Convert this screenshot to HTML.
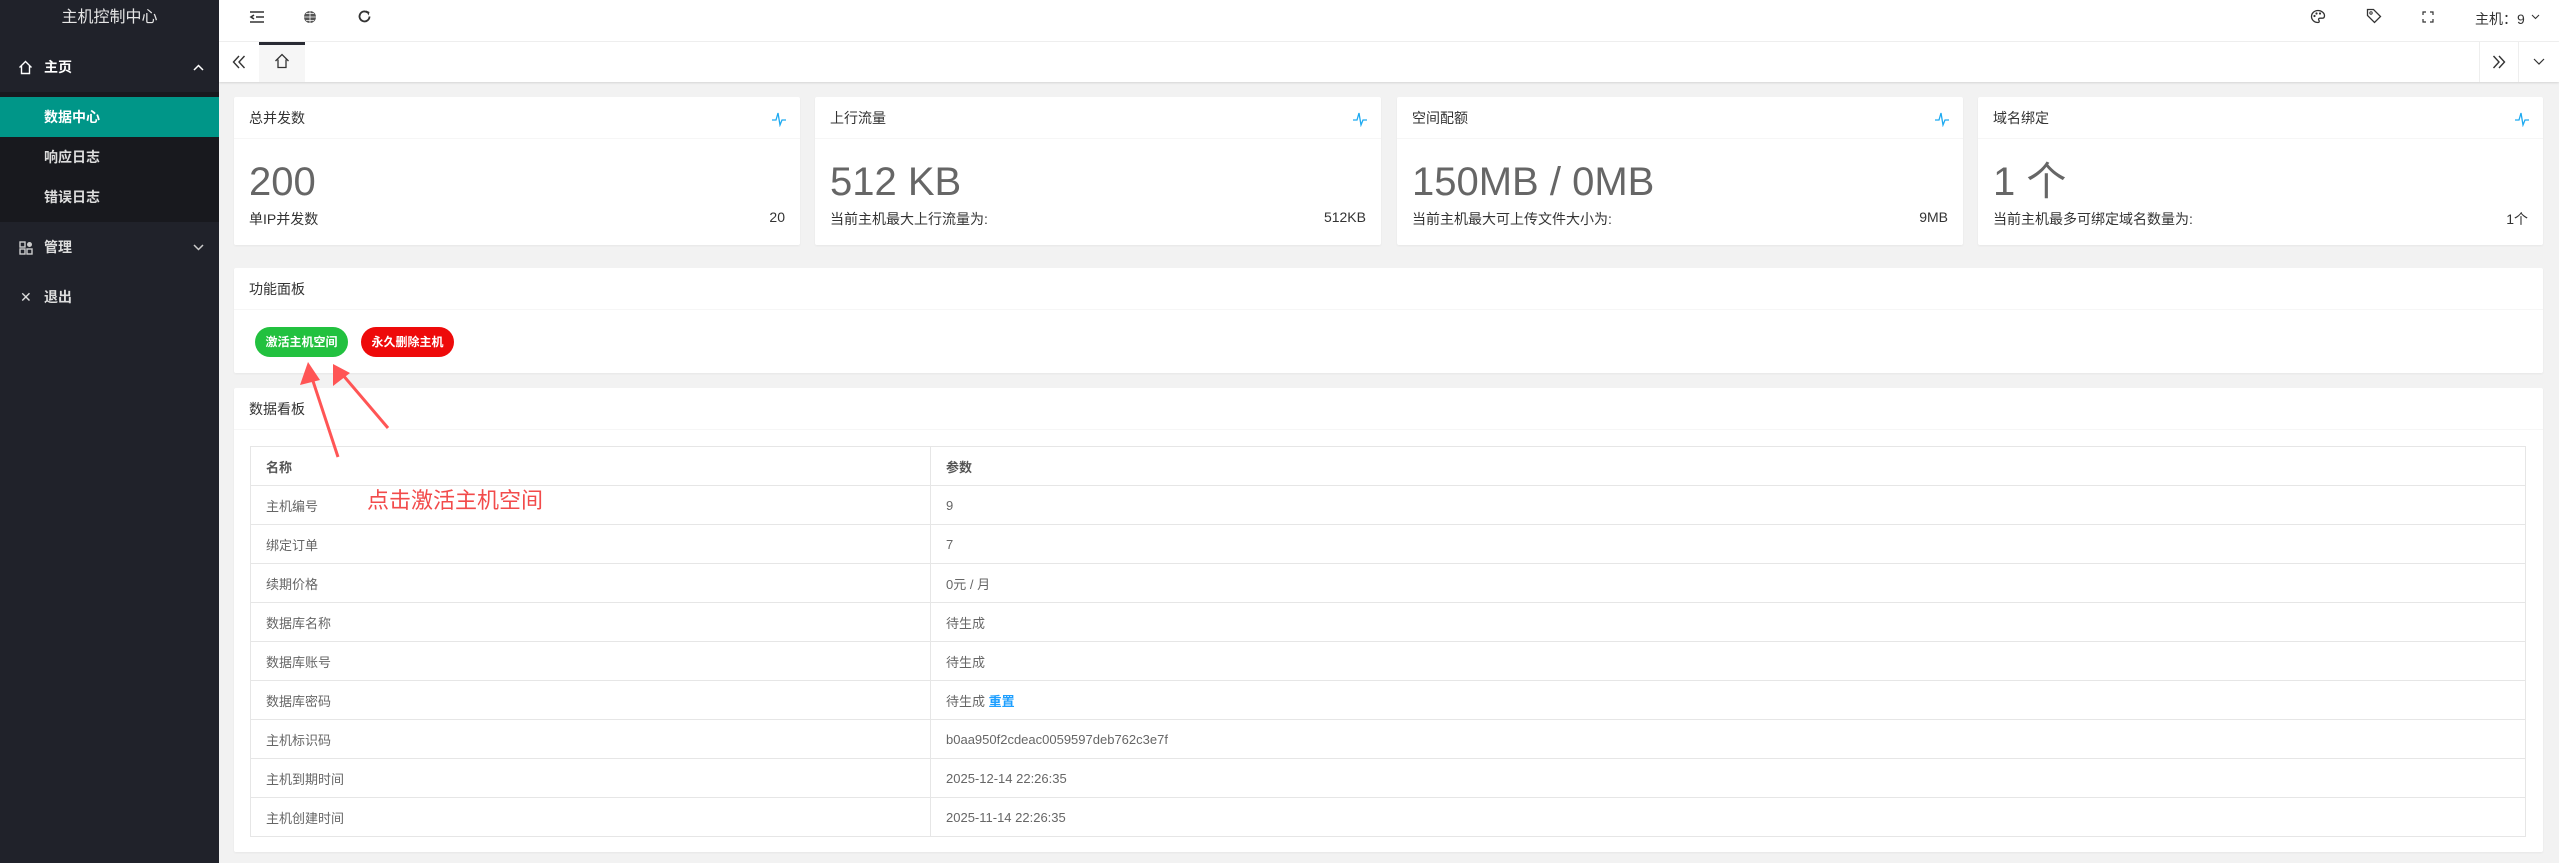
<!DOCTYPE html>
<html><head><meta charset="utf-8">
<style>
*{margin:0;padding:0;box-sizing:border-box}
body{width:2559px;height:863px;overflow:hidden;background:#f2f2f2;font-family:"Liberation Sans","Noto Sans CJK SC",sans-serif;color:#333;position:relative}
.abs{position:absolute}
.side{left:0;top:0;width:219px;height:863px;background:#20222a}
.side .t{position:absolute;left:0;width:219px;top:0;height:42px;line-height:36px;text-align:center;color:#e6e6e6;font-size:16px}
.mi{position:absolute;left:0;width:219px;height:40px;line-height:40px;color:#fff;font-size:14px;font-weight:bold}
.mi span{position:absolute;left:44px}
.sub{position:absolute;left:0;top:92px;width:219px;height:130px;background:#18191e}
.hdr{left:219px;top:0;width:2340px;height:42px;background:#fff;border-bottom:1px solid #f0f0f0}
.tabs{left:219px;top:42px;width:2340px;height:40px;background:#fff;box-shadow:0 1px 2px rgba(0,0,0,.12)}
.card{position:absolute;background:#fff;border-radius:2px;box-shadow:0 1px 2px rgba(0,0,0,.05)}
.ch{position:absolute;left:0;right:0;top:0;height:42px;border-bottom:1px solid #f6f6f6;font-size:14px;line-height:42px;padding-left:15px;color:#333}
.big{position:absolute;left:15px;top:62px;height:46px;line-height:46px;font-size:40px;color:#666;white-space:nowrap}
.btn{position:absolute;top:327px;height:30px;width:93px;border-radius:15px;color:#fff;font-size:12px;font-weight:bold;text-align:center;line-height:30px}
table{position:absolute;left:250px;top:446px;width:2276px;border-collapse:collapse;font-size:13px;color:#666}
td{height:39px;border:1px solid #e6e6e6;padding-left:15px}
</style></head><body>
<div class="abs side">
<div class="t">主机控制中心</div>
<div class="mi" style="top:47px"><svg class="abs" style="left:18px;top:13px" width="15" height="15" viewBox="0 0 15 15"><path d="M1.5 7.5L7.5 1.5 13.5 7.5M3.5 6v7.5h8V6" fill="none" stroke="#fff" stroke-width="1.4"/></svg><span>主页</span><svg class="abs" style="left:193px;top:17px" width="11" height="7"><path d="M1 6L5.5 1.5 10 6" fill="none" stroke="#fff" stroke-width="1.5"/></svg></div>
<div class="sub"></div>
<div class="mi" style="top:97px;background:#009688"><span>数据中心</span></div>
<div class="mi" style="top:137px;color:#ddd"><span>响应日志</span></div>
<div class="mi" style="top:177px;color:#ddd"><span>错误日志</span></div>
<div class="mi" style="top:227px;color:#ddd"><svg class="abs" style="left:19px;top:14px" width="14" height="14"><rect x="1" y="1" width="5" height="5" fill="none" stroke="#ccc" stroke-width="1.4"/><rect x="1" y="8" width="5" height="5" fill="none" stroke="#ccc" stroke-width="1.4"/><rect x="8" y="8" width="5" height="5" fill="none" stroke="#ccc" stroke-width="1.4"/><circle cx="10.5" cy="3.5" r="2.5" fill="#ccc"/></svg><span>管理</span><svg class="abs" style="left:193px;top:17px" width="11" height="7"><path d="M1 1L5.5 5.5 10 1" fill="none" stroke="#ccc" stroke-width="1.5"/></svg></div>
<div class="mi" style="top:277px;color:#ddd"><span style="left:20px;font-weight:normal">✕</span><span>退出</span></div>
</div>
<div class="abs hdr"></div>
<svg class="abs" style="left:249px;top:10px" width="16" height="14"><path d="M1 2h14M7 7h8M1 12h14M5 5L2 7l3 2" fill="none" stroke="#333" stroke-width="1.6"/></svg>
<svg class="abs" style="left:303px;top:10px" width="14" height="14"><circle cx="7" cy="7" r="6" fill="#555"/><path d="M1 7h12M7 1v12M3 3.5h8M3 10.5h8" fill="none" stroke="#fff" stroke-width=".8"/></svg>
<svg class="abs" style="left:357px;top:9px" width="15" height="15"><path d="M12.5 7.5a5 5 0 1 1-1.8-3.9" fill="none" stroke="#333" stroke-width="1.8"/><path d="M9 1.5l3.5 1.5-1 3.5z" fill="#333"/></svg>
<svg class="abs" style="left:2310px;top:9px" width="16" height="15"><path d="M8 1.5a6.5 6 0 1 0 0 12c1.5 0 1.5-1.5.8-2.3-.7-.9 0-2 1.2-2h2.2c1.5 0 2.3-1 2.3-2.5C14.5 4 11.5 1.5 8 1.5z" fill="none" stroke="#333" stroke-width="1.3"/><circle cx="4.5" cy="7" r="1.1" fill="#333"/><circle cx="6.5" cy="4.5" r="1.1" fill="#333"/><circle cx="10" cy="4.5" r="1.1" fill="#333"/></svg>
<svg class="abs" style="left:2366px;top:8px" width="16" height="16"><path d="M1.5 1.5h6l7 7-6 6-7-7z" fill="none" stroke="#333" stroke-width="1.3"/><circle cx="5" cy="5" r="1.2" fill="none" stroke="#333"/></svg>
<svg class="abs" style="left:2422px;top:11px" width="12" height="12"><path d="M1 4V1h3M8 1h3v3M11 8v3H8M4 11H1V8" fill="none" stroke="#333" stroke-width="1.2"/></svg>
<div class="abs" style="left:2475px;top:9px;font-size:14px;color:#333">主机：9</div>
<svg class="abs" style="left:2531px;top:14px" width="9" height="6"><path d="M1 1l3.5 3.5L8 1" fill="none" stroke="#333" stroke-width="1.1"/></svg>
<div class="abs tabs"></div>
<svg class="abs" style="left:232px;top:55px" width="14" height="14"><path d="M7 1L1.5 7 7 13M12.5 1L7 7l5.5 6" fill="none" stroke="#333" stroke-width="1.4"/></svg>
<div class="abs" style="left:259px;top:42px;width:46px;height:40px;background:#f6f6f6;border-top:3px solid #292b34"></div>
<svg class="abs" style="left:274px;top:53px" width="16" height="16"><path d="M1.5 8L8 1.5 14.5 8M4 6.5v8h8v-8" fill="none" stroke="#333" stroke-width="1.3"/></svg>
<div class="abs" style="left:2479px;top:42px;width:40px;height:40px;border-left:1px solid #eee;border-right:1px solid #eee"></div>
<svg class="abs" style="left:2492px;top:55px" width="14" height="14"><path d="M1.5 1L7 7l-5.5 6M7 1l5.5 6L7 13" fill="none" stroke="#333" stroke-width="1.4"/></svg>
<svg class="abs" style="left:2533px;top:58px" width="12" height="8"><path d="M1 1l5 5 5-5" fill="none" stroke="#333" stroke-width="1.2"/></svg>

<div class="card" style="left:234px;top:97px;width:566px;height:148px"><div class="ch">总并发数</div><div class="big">200</div><div class="abs" style="left:15px;top:112px;font-size:14px">单IP并发数</div><div class="abs" style="right:15px;top:112px;font-size:14px">20</div></div>
<div class="card" style="left:815px;top:97px;width:566px;height:148px"><div class="ch">上行流量</div><div class="big">512 KB</div><div class="abs" style="left:15px;top:112px;font-size:14px">当前主机最大上行流量为:</div><div class="abs" style="right:15px;top:112px;font-size:14px">512KB</div></div>
<div class="card" style="left:1397px;top:97px;width:566px;height:148px"><div class="ch">空间配额</div><div class="big">150MB / 0MB</div><div class="abs" style="left:15px;top:112px;font-size:14px">当前主机最大可上传文件大小为:</div><div class="abs" style="right:15px;top:112px;font-size:14px">9MB</div></div>
<div class="card" style="left:1978px;top:97px;width:565px;height:148px"><div class="ch">域名绑定</div><div class="big">1 个</div><div class="abs" style="left:15px;top:112px;font-size:14px">当前主机最多可绑定域名数量为:</div><div class="abs" style="right:15px;top:112px;font-size:14px">1个</div></div>
<svg class="abs" style="left:772px;top:111px" width="14" height="16"><path d="M0 9h4l2-7 2 12 2-5h4" fill="none" stroke="#1eaaf1" stroke-width="1.3"/></svg>
<svg class="abs" style="left:1353px;top:111px" width="14" height="16"><path d="M0 9h4l2-7 2 12 2-5h4" fill="none" stroke="#1eaaf1" stroke-width="1.3"/></svg>
<svg class="abs" style="left:1935px;top:111px" width="14" height="16"><path d="M0 9h4l2-7 2 12 2-5h4" fill="none" stroke="#1eaaf1" stroke-width="1.3"/></svg>
<svg class="abs" style="left:2515px;top:111px" width="14" height="16"><path d="M0 9h4l2-7 2 12 2-5h4" fill="none" stroke="#1eaaf1" stroke-width="1.3"/></svg>

<div class="card" style="left:234px;top:268px;width:2309px;height:105px"><div class="ch">功能面板</div></div>
<div class="btn" style="left:255px;background:#22c13f">激活主机空间</div>
<div class="btn" style="left:361px;background:#ee0a0a">永久删除主机</div>

<div class="card" style="left:234px;top:388px;width:2309px;height:464px"><div class="ch">数据看板</div></div>
<table>
<tr><td style="width:680px;font-weight:bold;color:#555">名称</td><td style="font-weight:bold;color:#555">参数</td></tr>
<tr><td>主机编号</td><td>9</td></tr>
<tr><td>绑定订单</td><td>7</td></tr>
<tr><td>续期价格</td><td>0元 / 月</td></tr>
<tr><td>数据库名称</td><td>待生成</td></tr>
<tr><td>数据库账号</td><td>待生成</td></tr>
<tr><td>数据库密码</td><td>待生成 <b style="color:#1e9fff">重置</b></td></tr>
<tr><td>主机标识码</td><td>b0aa950f2cdeac0059597deb762c3e7f</td></tr>
<tr><td>主机到期时间</td><td>2025-12-14 22:26:35</td></tr>
<tr><td>主机创建时间</td><td>2025-11-14 22:26:35</td></tr>
</table>
<div class="abs" style="left:367px;top:483px;font-size:22px;color:#f24b4b">点击激活主机空间</div>
<svg class="abs" style="left:0;top:0" width="600" height="500">
<path d="M338 457L311 375" stroke="#f55" stroke-width="3"/><path d="M308 362L300 385 320 380z" fill="#f55"/>
<path d="M388 428L342 374" stroke="#f55" stroke-width="3"/><path d="M333 364L333 386 350 373z" fill="#f55"/>
</svg>
</body></html>
